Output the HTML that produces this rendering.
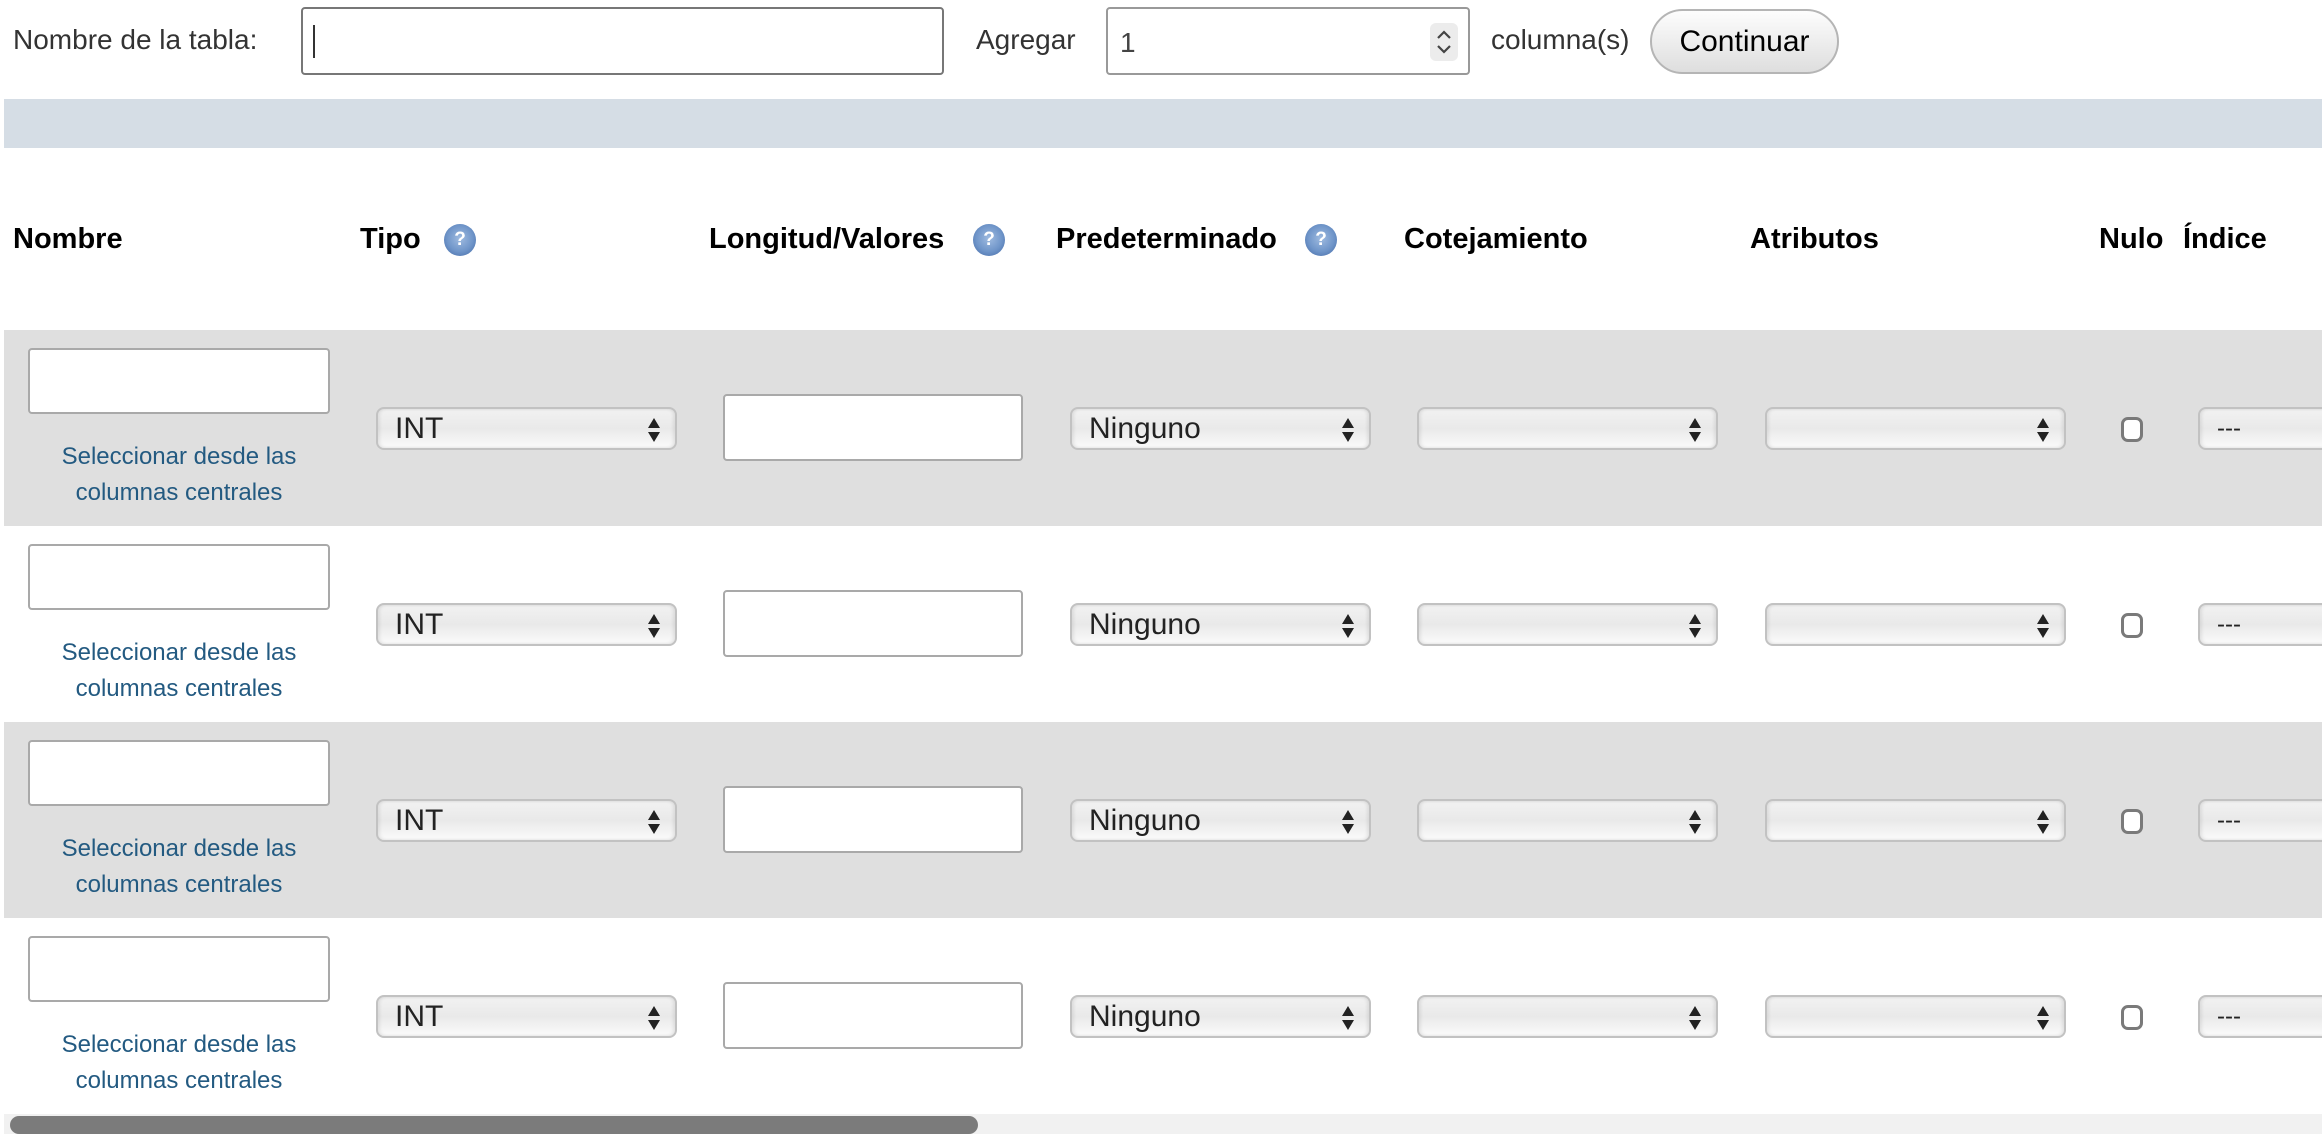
<!DOCTYPE html>
<html><head><meta charset="utf-8">
<style>
html,body{margin:0;padding:0;width:2322px;height:1134px;overflow:hidden;background:#fff;font-family:"Liberation Sans",Arial,sans-serif;position:relative}
.a{position:absolute}
.lbl{font-size:28px;color:#333;line-height:1}
.inp{position:absolute;background:#fff;border:2px solid #a9a9a9;border-radius:4px;box-sizing:border-box}
.hd{position:absolute;font-weight:bold;font-size:29px;color:#000;top:223px;line-height:32px}
.help{position:absolute;top:224px;width:32px;height:32px;border-radius:50%;background:radial-gradient(circle at 50% 45%,#9fbbe0 0%,#6f95c9 55%,#5a80b8 75%,#c9d7ea 78%,#7d9fcf 100%);color:#fff;font-weight:bold;font-size:19px;text-align:center;line-height:32px}
.row{position:absolute;left:4px;right:0;height:196px}
.gray{background:#dfdfdf}
.sel{position:absolute;height:43px;box-sizing:border-box;border:2px solid #c2c2c2;border-radius:8px;background:linear-gradient(#f2f2f2,#e9e9e9 50%,#fbfbfb);box-shadow:inset 2px 0 3px rgba(0,0,0,.08),inset -2px 0 3px rgba(0,0,0,.08);font-size:30px;color:#222;line-height:39px;padding-left:17px;overflow:hidden;white-space:nowrap}
.arr{position:absolute;right:14px;top:8px;width:14px;height:26px}
.link{position:absolute;width:302px;text-align:center;font-size:24px;color:#235a81;line-height:36px}
.cb{position:absolute;width:22px;height:25px;border:3px solid #7a7a7a;border-radius:7px;box-sizing:border-box;background:#fff}
</style></head><body>

<div class="a lbl" style="left:13px;top:26px">Nombre de la tabla:</div>
<div class="inp" style="left:301px;top:7px;width:643px;height:68px;border-color:#777"><div class="a" style="left:10px;top:16px;width:2px;height:33px;background:#333"></div></div>
<div class="a lbl" style="left:976px;top:26px">Agregar</div>
<div class="inp" style="left:1106px;top:7px;width:364px;height:68px;border-color:#999"><div class="a lbl" style="left:12px;top:20px;color:#444">1</div>
<div class="a" style="right:10px;top:14px;width:28px;height:38px;background:#ececec;border-radius:6px"><svg width="28" height="38" viewBox="0 0 28 38"><path d="M8 15 L14 9 L20 15 M8 23 L14 29 L20 23" stroke="#444" stroke-width="2.2" fill="none"/></svg></div></div>
<div class="a lbl" style="left:1491px;top:26px">columna(s)</div>
<div class="a" style="left:1650px;top:9px;width:189px;height:65px;box-sizing:border-box;border:2px solid #b5b5b5;border-radius:33px;background:linear-gradient(#fdfdfd,#dedede);font-size:30px;color:#000;text-align:center;line-height:61px">Continuar</div>

<div class="a" style="left:4px;right:0;top:99px;height:49px;background:#d5dde5"></div>

<div class="hd" style="left:13px">Nombre</div>
<div class="hd" style="left:360px">Tipo</div><div class="help" style="left:444px">?</div>
<div class="hd" style="left:709px">Longitud/Valores</div><div class="help" style="left:973px">?</div>
<div class="hd" style="left:1056px">Predeterminado</div><div class="help" style="left:1305px">?</div>
<div class="hd" style="left:1404px">Cotejamiento</div>
<div class="hd" style="left:1750px">Atributos</div>
<div class="hd" style="left:2099px">Nulo</div>
<div class="hd" style="left:2183px">Índice</div>

<div class="row gray" style="top:330px"></div>
<div class="row" style="top:526px"></div>
<div class="row gray" style="top:722px"></div>
<div class="row" style="top:918px"></div>

<div id="rows"></div>

<div class="a" style="left:4px;right:0;top:1114px;height:20px;background:#f1f1f1"></div>
<div class="a" style="left:10px;top:1116px;width:968px;height:18px;border-radius:9px;background:#7b7b7b"></div>

<script>
var arr='<svg class="arr" viewBox="0 0 14 26"><path d="M7 1 L13 11 L1 11Z M7 25 L13 15 L1 15Z" fill="#222"/></svg>';
var h='';
[330,526,722,918].forEach(function(t){
 h+='<div class="inp" style="left:28px;top:'+(t+18)+'px;width:302px;height:66px"></div>';
 h+='<div class="link" style="left:28px;top:'+(t+109)+'px">Seleccionar desde las<br>columnas centrales</div>';
 h+='<div class="sel" style="left:376px;top:'+(t+77)+'px;width:301px">INT'+arr+'</div>';
 h+='<div class="inp" style="left:723px;top:'+(t+64)+'px;width:300px;height:67px"></div>';
 h+='<div class="sel" style="left:1070px;top:'+(t+77)+'px;width:301px">Ninguno'+arr+'</div>';
 h+='<div class="sel" style="left:1417px;top:'+(t+77)+'px;width:301px">'+arr+'</div>';
 h+='<div class="sel" style="left:1765px;top:'+(t+77)+'px;width:301px">'+arr+'</div>';
 h+='<div class="cb" style="left:2121px;top:'+(t+87)+'px"></div>';
 h+='<div class="sel" style="left:2198px;top:'+(t+77)+'px;width:200px;font-size:24px">---</div>';
});
document.getElementById('rows').innerHTML=h;
</script>
</body></html>
